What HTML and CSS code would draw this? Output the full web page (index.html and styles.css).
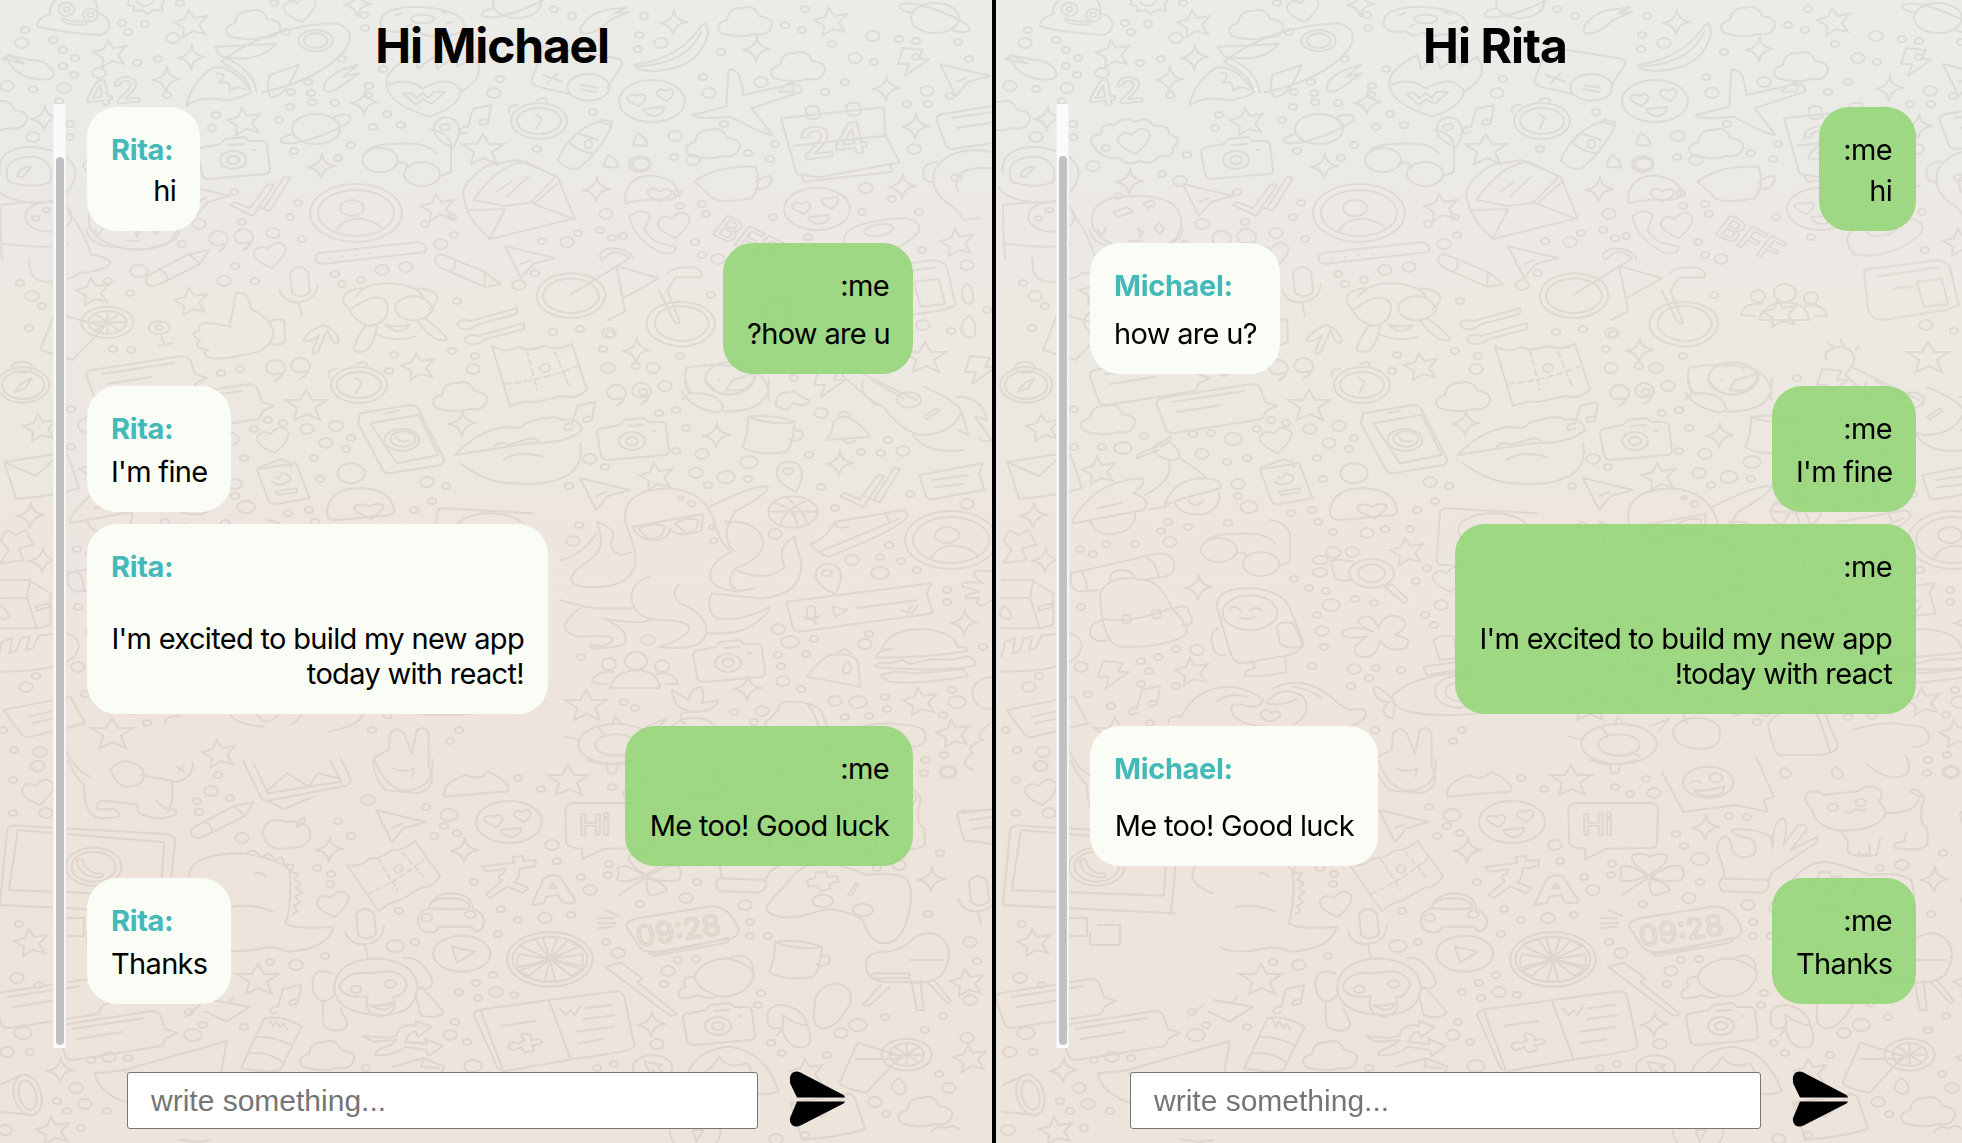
FILE: index.html
```html
<!DOCTYPE html>
<html lang="en">
<head>
<meta charset="utf-8">
<title>Chat</title>
<link rel="stylesheet" href="styles.css">
</head>
<body>
<main class="app">
  <section class="panel panel-left">
    <svg class="wallpaper" width="1003" height="1143" viewBox="0 0 1003 1143" aria-hidden="true">
      <defs>
        <marker id="dot-s" markerUnits="userSpaceOnUse" markerWidth="14" markerHeight="14" refX="7" refY="7"><ellipse cx="7" cy="7" rx="4.2" ry="3.1"/></marker>
        <marker id="dot-m" markerUnits="userSpaceOnUse" markerWidth="20" markerHeight="20" refX="10" refY="10"><ellipse cx="10" cy="10" rx="6.8" ry="4.9"/></marker>
        <marker id="dot-l" markerUnits="userSpaceOnUse" markerWidth="24" markerHeight="24" refX="12" refY="12"><ellipse cx="12" cy="12" rx="8.8" ry="6"/></marker>
        <marker id="star" markerUnits="userSpaceOnUse" markerWidth="44" markerHeight="36" refX="20" refY="16"><path d="M18 3l5 8 13-2-8 9 6 9-12-3-10 6 1-9-10-6 11-3z"/></marker>
        <marker id="star-b" markerUnits="userSpaceOnUse" markerWidth="54" markerHeight="40" refX="25" refY="18"><path d="M24 3l6 10 15 0-12 8 5 12-13-6-13 6 3-12-12-8 15 0z"/></marker>
        <marker id="spark" markerUnits="userSpaceOnUse" markerWidth="44" markerHeight="36" refX="20" refY="16"><path d="M21 3q0 11 14 13q-13 1-15 13q-2-11-14-12q14-2 15-14z"/></marker>
        <g id="cam"><path d="M-28-13l16-3 4-5 20-2 4 4 13 0q5 0 5 5l3 23q0 5-5 5l-56 5q-6 0-7-5l-4-22q0-5 7-5z"/><ellipse rx="13" ry="9"/><ellipse rx="6" ry="4"/><path d="M-4-15l15-1M20-10h3"/></g>
        <g id="smile"><ellipse rx="33" ry="21"/><path d="M-13 5q-14-6-12-9q3-4 10-1q5-4 8 0q2 4-6 10zM15 0q-12-5-10-9q3-4 8-1q6-4 8 0q2 4-6 10zM-9 8l21-2q0 7-9 9q-9 0-12-7z"/></g>
        <g id="cloud"><path d="M-24 13q-8-9 6-13q2-13 15-12q13-4 17 8q17 2 12 12q-4 8-16 6q-16 5-34-1z"/></g>
        <g id="heart"><path d="M0 12q-20-8-18-16q5-8 14-3q7-10 16-4q6 7-12 23z"/></g>
        <g id="clock"><ellipse rx="28" ry="18"/><ellipse rx="22" ry="13"/><path d="M-3-7q8 4 4 8l-4 7M-30-8q-2-8 8-8M-2-21q10-5 10 2"/></g>
        <g id="note"><path d="M-12 14q-8 3-8-1q2-6 8-4l5-18 18-4-3 18q-8 4-9 0q2-5 9-3"/></g>
        <g id="quotes"><path d="M-12 10q8-3 6-8q-14 4-15-6q4-10 14-6q12 8-5 20zM13 8q8-3 6-8q-14 4-15-6q4-10 14-6q12 8-5 20z"/></g>
        <g id="avatar"><ellipse rx="46" ry="29"/><ellipse rx="38" ry="23"/><ellipse cx="-4" cy="-5" rx="12" ry="8"/><path d="M-20 18q8-14 26-12q14 2 20 9"/></g>
        <g id="bubble"><path d="M-52 3q-4-8 4-10l90-14q7 0 9 6l4 12 12 4-11 5-4 8-88 14q-8 0-9-6z"/><path d="M-38-3l72-11M-33 7l45-7"/></g>
        <g id="shades"><ellipse cx="-30" cy="-4" rx="18" ry="12"/><ellipse cx="12" cy="10" rx="18" ry="12"/><path d="M-42-14q10-8 50-6q16 4 18 10M-15 1q10-6 14 3M30 12l11-4v-28q-4-12-20-14"/></g>
        <g id="bolt"><path d="M-10-14l20 2-5 9h11l-24 17 4-12h-11z"/></g>
        <g id="plane"><path d="M-20-12l50 12-22 6-12 14zM-4 6l10-4"/></g>
        <g id="ticks"><path d="M-32 10l4-3 16 6 18-24 6 1-21 31zM2 13l20-31 6 1-20 33-12-4"/></g>
        <g id="pin"><path d="M8 18q-22-10-19-22q5-12 19-7q12 8 0 29z"/><ellipse cy="-3" rx="5" ry="3"/></g>
        <g id="pencil"><path d="M-31 12q-3-6 2-9l40-21 20-4-9 14-40 20q-8 4-13 0zM11-18l11 10M-19-3q8 4 8 10"/></g>
        <g id="group"><ellipse cy="-18" rx="11" ry="9"/><path d="M-26 9q4-16 26-18q22 1 24 18z"/><ellipse cx="-27" cy="-15" rx="7" ry="6"/><ellipse cx="26" cy="-13" rx="7" ry="6"/><path d="M-30 5l-14-1q2-13 22-11M30 5l12 0q-5-14-22-10"/></g>
        <g id="cup"><path d="M-25-18q0 20-6 30q14 9 44 5q6-4 9-30M-25-18q22-4 47 5q-20 4-47-5z"/><path d="M20-5q14 0 8 9q-8 4-12 0"/></g>
        <g id="mic"><path d="M-9-14q9-10 18 0l2 20q-9 8-18 1zM-20 4q6 14 20 12q17-1 19-18M0 17l3 13"/></g>
        <g id="map"><path d="M-50-20q14 8 26 1q12 5 26-1q14 5 28-2l15 46q-12 10-24 6l-28 6q-10-2-25 4z"/><path d="M-37 18q40-4 72-18M-15-16l10 40M13-14l14 34" stroke-dasharray="6 4"/><ellipse cx="3" cy="2" rx="5" ry="4"/></g>
        <g id="letter"><path d="M-34-13l59-9q4 0 6 5l10 30q-25 8-63 11q-4-14-12-37zl32 14 26-24"/></g>
        <g id="planet"><ellipse rx="24" ry="15"/><path d="M-22 5q-16 3-13 8q12 5 44-8q30-12 25-18q-8-3-16 1"/></g>
        <g id="fork"><path d="M-33 9q4-6 14-3l46-13M-33 9q3 8 16 4q8-6 14-6l30-8 0-5"/></g>
      </defs>
      <g id="doodles" class="doodles">
        <polyline class="dots-s" points="25,30 53,40 63,50 75,58 74,75 63,66 33,89 137,63 158,59 122,23 128,32 145,24 180,3 167,95 59,101 274,3 286,32 364,15 365,28 342,59 383,69 369,86 368,95 308,82 311,93 312,102 291,92 290,107 335,103 387,114 279,120 373,127 401,125 351,145 338,158 294,151 212,128 216,115 500,79 593,112 554,9 572,16 537,149 70,124 70,137 234,192 242,222 290,217 298,203 302,239 182,244 425,224 452,217 454,235 578,233 542,241 600,230 623,236 108,281 130,293 20,283 42,306 29,328 255,281 235,266 335,274 342,284 361,280 535,273 457,301 113,349 131,350 221,373 240,369 394,355 389,371 452,351 475,356 553,332 580,329 603,349 636,366 639,35 638,49 644,16 721,52 703,77 785,25 802,30 805,9 832,44 874,62 845,82 825,92 899,39 916,41 916,57 958,42 969,59 907,104 928,104 950,96 724,124 775,144 748,153 770,159 674,157 862,212 892,199 919,212 702,204 680,206 678,193 706,214 773,217 612,238 702,255 695,242 808,237 922,250 711,295 951,331 610,334 680,356 643,392 794,378 987,310 103,148 115,196 159,174 184,155"/>
        <polyline class="dots-s" points="71,409 71,447 99,447 141,436 190,434 208,433 254,429 268,420 283,423 346,449 351,438 314,458 224,462 244,458 235,496 320,479 446,486 432,501 414,510 288,513 309,510 315,522 330,532 382,529 407,529 225,523 185,527 165,522 158,531 132,544 103,544 77,549 90,554 291,579 306,588 323,591 314,615 321,647 352,599 371,603 424,568 413,581 422,615 431,625 78,607 85,694 108,706 138,661 155,657 146,671 138,684 173,649 173,686 147,723 309,666 373,668 366,678 398,670 348,686 372,730 459,730 450,741 659,413 676,410 686,428 676,451 605,467 748,479 708,485 569,486 809,455 861,452 881,453 888,440 821,487 835,508 910,494 889,545 880,557 901,561 917,570 947,590 947,602 579,525 814,639 806,654 778,655 781,666 801,689 869,634 581,657 624,702 635,708 734,712 754,722 885,697 887,709 845,717 869,716 952,690 983,647 943,715 925,760 944,755 36,676 3,730 14,750"/>
        <polyline class="dots-s" points="13,780 13,813 218,775 197,801 230,798 199,812 338,821 351,836 426,807 434,836 457,833 444,826 474,882 501,909 518,920 498,934 399,911 317,868 331,874 330,884 415,942 325,956 270,962 19,924 39,985 30,1052 91,1060 128,1058 189,1012 203,1025 244,1027 57,1101 67,1111 107,1111 81,1128 459,992 476,983 493,975 478,998 514,995 455,1022 467,1042 366,1068 518,778 541,789 612,787 627,794 643,779 673,834 681,846 726,816 744,817 609,864 608,875 581,877 557,861 640,904 697,882 571,915 606,942 750,922 750,936 768,936 678,960 696,959 664,984 761,993 758,1005 597,1068 614,1064 771,1043 782,1053 827,1055 885,1017 925,1030 943,1016 877,868 924,773 928,914 940,853 886,1114 939,1074 805,1135 977,961"/>
        <polyline class="dots-m" points="22,43 64,88 7,86 99,73 173,38 494,93 33,137 273,233 199,224 441,244 606,214 567,242 32,296 224,281 382,270 406,267 519,285 473,369 609,333 608,368 661,43 709,93 761,82 873,36 855,58 927,91 675,136 693,160 914,149 866,188 718,259 967,265 923,325 653,368 307,429 336,426 326,443 199,454 235,484 427,482 364,533 167,542 319,631 438,605 78,667 194,650 351,669 702,454 665,386 590,459 696,473 821,413 903,451 967,504 775,534 852,560 573,541 778,629 783,681 865,644 648,640 762,711 835,701 26,687 40,752 38,766 90,166 177,181"/>
        <polyline class="dots-m" points="37,766 46,813 211,791 242,838 368,800 552,845 545,918 296,965 17,978 7,1052 109,1057 76,1088 85,1104 5,1130 496,992 450,1035 651,793 590,890 686,898 745,905 618,953 668,971 657,1044 841,1033 899,865 948,772 875,1102 949,1088 776,1139 970,1000 967,1038 970,942"/>
        <polyline class="dots-l" points="139,271 641,164 120,448 230,439 246,507 328,605 749,462 726,477 880,573 790,642 858,702 957,702 948,772 449,815 395,946 23,1033 193,1035 473,1066 697,859 858,1025"/>
        <polyline class="stars" points="110,53 191,23 244,121 438,207 93,291 191,301 418,366 831,21 957,242 96,470 40,427 404,551 189,671 656,476 920,701 953,733 31,942 53,1130 219,753 807,1072 967,982 970,1058 777,313"/>
        <polyline class="stars-b" points="484,149 926,357 307,405 587,705 259,979 113,733 569,780"/>
        <polyline class="sparks" points="191,57 166,79 364,102 321,166 596,189 357,4 636,350 44,118 673,22 756,49 886,88 915,126 902,186 126,181 195,587 30,515 42,560 462,423 716,435 839,463 964,622 747,688 329,849 464,850 60,1070 702,827 651,1024 931,879"/>

        <use href="#cloud" x="253" y="23"/><use href="#cloud" x="745" y="20"/><use href="#cloud" x="798" y="65"/><use href="#cloud" x="713" y="142"/><use href="#cloud" x="105" y="418"/><use href="#cloud" x="460" y="395"/><use href="#cloud" x="327" y="1054"/><use href="#cloud" x="925" y="1110"/><use href="#cloud" x="0" y="114"/>
        <use href="#heart" x="302" y="10"/><use href="#heart" x="272" y="256"/><use href="#heart" x="676" y="226"/><use href="#heart" x="275" y="441"/><use href="#heart" x="335" y="905"/><use href="#heart" x="40" y="793"/><use href="#heart" x="448" y="580"/><use href="#heart" x="133" y="142"/>
        <use href="#cam" x="233" y="160"/><use href="#cam" x="632" y="441"/><use href="#cam" x="728" y="663"/><use href="#cam" x="718" y="1026"/>
        <use href="#smile" x="652" y="101"/><use href="#smile" x="817" y="209"/><use href="#smile" x="509" y="822"/>
        <use href="#clock" x="539" y="121"/><use href="#clock" x="359" y="385"/>
        <use href="#note" x="480" y="118"/><use href="#note" x="584" y="415"/><use href="#note" x="146" y="699"/><use href="#note" x="290" y="998"/>
        <use href="#quotes" x="230" y="242"/><use href="#quotes" x="287" y="371"/><use href="#quotes" x="628" y="396"/>
        <use href="#avatar" x="356" y="213"/><use href="#avatar" x="951" y="540"/>
        <use href="#bubble" x="140" y="377"/><use href="#bubble" x="207" y="405"/><use href="#bubble" x="990" y="121"/><use href="#bubble" x="46" y="1000"/><use href="#bubble" x="110" y="1032"/>
        <use href="#shades" x="410" y="164"/><use href="#shades" x="246" y="554"/>
        <use href="#bolt" x="913" y="62"/><use href="#bolt" x="829" y="383"/><use href="#bolt" x="110" y="675"/><use href="#bolt" x="980" y="370"/>
        <use href="#plane" x="525" y="258"/><use href="#plane" x="600" y="490"/><use href="#plane" x="960" y="76"/><use href="#plane" x="396" y="822"/><use href="#plane" x="200" y="196"/>
        <use href="#ticks" x="262" y="195"/><use href="#ticks" x="872" y="486"/>
        <use href="#pin" x="445" y="130"/><use href="#pin" x="788" y="474"/><use href="#pin" x="827" y="576"/>
        <use href="#pencil" x="178" y="272"/><use href="#pencil" x="223" y="824"/><use href="#pencil" transform="translate(464 275) rotate(50)"/>
        <use href="#group" x="636" y="679"/><use href="#group" x="782" y="311"/>
        <use href="#cup" x="773" y="435"/><use href="#cup" x="800" y="960"/>
        <use href="#mic" x="299" y="286"/><use href="#mic" x="365" y="928"/><use href="#mic" x="978" y="895"/>
        <use href="#map" x="542" y="366"/><use href="#map" transform="translate(395 868) rotate(-18) scale(.9)"/>
        <use href="#letter" x="38" y="475"/><use href="#letter" x="824" y="1116"/>
        <use href="#planet" x="316" y="129"/><use href="#planet" transform="translate(935 18) scale(1 -1)"/><use href="#planet" x="517" y="3"/>
        <use href="#fork" x="490" y="315"/><use href="#fork" x="497" y="330"/>
        <path d="M92 148q-10-12 6-14q0-12 14-9q8-10 20-3q14-7 18 4q16-2 16 8q16 5 4 13q2 11-14 9q-6 10-20 5q-12 6-20-3q-18 1-24-10zM58 918h26v18h-22M95 925h22v20h-30v-12M962 813l44-5M958 818q-3-6 4-7l40-2M958 818l6 22 36 5M970 820l30-4M972 829l26-3"/>
        <path d="M90 228q-6-24 20-30q40-6 58 5q16 14 8 30q-6 14-30 16q-40 3-56-21zM110 212l14-5 6 5-16 5zM140 203l10-3 2 5-8 3zM156 222l5 8-5 4-4-6zM135 228l5 4-3 5z"/>

        <g transform="scale(.4209 .3333)">
          <path d="M90 80q-8-22 30-38q-5-25 15-45M90 80q60 18 150 25q25-12 18-42q-8-20-28-23q5-25-8-40M145 55q10 25 60 18l2-10q-30 5-62-8z"/>
          <ellipse cx="158" cy="28" rx="19" ry="20"/><ellipse cx="215" cy="45" rx="17" ry="19"/><ellipse cx="158" cy="28" rx="7" ry="7"/><ellipse cx="215" cy="45" rx="7" ry="7"/>
          <path d="M305 0l-2 15 15 4 0 14 20-2 12 12 14-14 22 4-2-18 6-15M325 5q20 25 38 0"/>
          <path d="M525 185Q640 75 800 70Q850 90 820 150Q760 240 622 277M510 140l145-8q-40 60-130 37zM640 225l70-30q-30 90-60 96q-20 0-10-66zM540 175q65 40 70 103M530 190q60 35 65 85M443 318q10-70 62-115q50-10 92 75q-50 30-75 20q-50-10-79 20M515 220q30 0 5 28q30-10 25 25q20-20 40-3"/>
          <ellipse cx="750" cy="122" rx="41" ry="32"/><ellipse cx="750" cy="122" rx="28" ry="22"/>
          <path d="M15 170q10 40 45 60q60 20 68-5q-10-45-55-45l-55-15 40 26-52-14zM770 270q-5-30 40-60l40-15-35 35 38-10-40 35q-30 30-43 15z"/>
          <text x="205" y="322" font-size="104" transform="rotate(-8 205 322)">42</text>
          <path d="M905 80q-10-60 90-60q110 10 108 60q-15 35-60 22q-25 14-45-5q-25 18-40-4q-35 10-53-13zM940 45l15-5M965 80l12-6M1050 35l12 8M1060 70l18-4"/><ellipse cx="1004" cy="57" rx="28" ry="13"/>
          <path d="M1380 80q20-40 60-50l50-8-30 18 35-5-45 25q-40 50-70 38z"/>
          <path d="M1020 350Q915 310 918 245Q920 205 985 165l8 42 38-37 8 36 42-36 6 30 40-30Q1160 230 1095 275Q1090 320 1020 350zM918 258q45-30 87 8q60-45 90 5M957 280l22 0 10 15 15-17 14 16 12-18 28 0-32 36-20-14-18 16z"/>
          <path d="M1290 140l175 35q18 5 12 20l-35 70M1290 150l-27 90q0 15 15 20l75 22M1310 160l10 20M1290 225l45 20M1325 220l-25 30"/><ellipse cx="1398" cy="262" rx="50" ry="40"/><path d="M1380 255l38 8M1378 268l38 8"/>
          <path d="M1325 480q30-85 95-115l35 10q-30 80-80 130q-30 8-50-25zM1355 430q20 25 55 30M1375 400l45 20M1420 370l10-12 25 8-5 14"/>
          <ellipse cx="1398" cy="432" rx="9" ry="13"/><path d="M1505 435q0-20 12-35q25 20 20 38zM1435 500q0-20 12-35q25 20 20 38z"/><ellipse cx="1520" cy="492" rx="25" ry="24"/>
          <path d="M1100 575q10-40 60-80l70-15 95 50 40 125-200 62q-60-60-65-142zM1125 600q60-110 125-115l70 45-60 78-60 10zM1115 630l85-2-38 90M1260 608l105 50M1325 550l-55 60M1180 575l35-30M1205 590l50-60"/>
          <path d="M5 780q-5-80-5-165q60-10 125-10M0 730q120 20 160 0M0 520q-10-75 75-80q105 15 105 85q-15 80-90 85q-90-10-100-50M20 545q-20-75 60-75q50 10 40 75q-40 25-100 0zM40 530q5-30 35-30l-20 30z"/><ellipse cx="115" cy="650" rx="55" ry="45"/><ellipse cx="85" cy="655" rx="9" ry="7"/><ellipse cx="110" cy="630" rx="9" ry="7"/>
          <path d="M70 775q-5 75 50 70q60-10 65-25q80-10 77-35q-20-20-45-20q-20-80-55-130"/>
          <path d="M205 690q10 50 70 50q60 20 90 0q60-10 62-50M245 680q-10 40-20 10M300 722h30"/>
          <ellipse cx="255" cy="967" rx="62" ry="47"/><ellipse cx="255" cy="967" rx="45" ry="34"/><path d="M255 935v64M215 967h85M230 945l52 46M280 945l-52 46M130 940l118 40-75 100-78-30z"/>
          <ellipse cx="378" cy="983" rx="25" ry="19"/><ellipse cx="378" cy="983" rx="8" ry="7"/><path d="M382 1003l8 32M375 1038l35-8"/>
          <path d="M545 980q15-90 15-100q30-10 35 45q50 30 55 75q-10 60-75 65q-30 12-75 10q-25-15-5-25q-40-5-20-30q-30-20 0-30q-10-15 15-22l60 12M640 965q15-10 35-5l2 65q-15 15-38 5"/>
          <path d="M720 1020q20-35 48-45q30 10 38 50q-15 15-28-35l-25 70q-15 5-10-10l15-45q-20 25-38 15z"/>
          <path d="M755 760l240-34q25 10 15 30l-245 36q-25-5-10-32z"/><path d="M780 775h1M812 770h1M845 766h1M878 762h1"/>
          <path d="M845 890q20-40 80-40q70 5 80 45M830 930q-40-55 30-65M1020 930q50-55-30-65M830 930q80-70 92-10q0 50-45 58q-35-15-47-48zM1030 930q-20-50-60-40q-50 20-20 60q50 30 80-20zM870 975q-40 75-25 80q40 10 50-75M1010 955q60 60 50 65q-30 10-70-60M915 975q30 8 58 0q-10 20-35 18zM890 1000q50 30 95 10"/>
          <path d="M1275 890q5-65 82-70q75 5 82 65q-10 65-85 70q-75-10-79-65zM1290 890q5-50 67-55q60 5 67 55q-10 45-70 50q-60-10-64-50zM1355 885l140-110q-20-25-45-15l-20 20q-15-20 15-35q50 0 60 30M1470 800l95 35-85 60-15-90 20 130-40 25"/>
          <ellipse cx="55" cy="1155" rx="62" ry="53"/><ellipse cx="55" cy="1155" rx="50" ry="42"/><ellipse cx="52" cy="1102" rx="24" ry="17"/><path d="M35 1175l15-25 25-15-15 30z"/>
        </g>
        <g transform="translate(600) scale(.4209 .3333)">
          <path d="M82 195q110-20 160-120l10-5 5 30q-20 105-120 112q-55 2-55-17zM90 200q120-10 150-105"/>
          <path d="M300 320l5-110q30-10 35 75l90-25q50-20 50 15l-120 50 50 80q-20 0-100-55q-80 10-90-5zM425 275q20-30 35-25v25z"/>
          <path d="M430 355l245-33 2 80 35 85-190 45-55-10zM460 437l218-30M480 530l5 15 210-30-6-20M488 325q10-10 30-5l5 30q-10 10-30 5zM585 315q10-10 30-5l5 30q-10 10-30 5z"/>
          <text x="482" y="480" font-size="128" transform="rotate(-9 482 480)">24</text>
          <path d="M60 585q10-60 65-58q60 10 62 58q-15 18-35 15q-40-5-92 10zM140 605q-35-20-25-35q15-10 25 5q20-15 30 0q0 15-30 30z"/>
          <path d="M225 545q50-50 145-45q15 60-10 95q-90 20-100-10zM370 545q40-30 38-8q-5 35-40 30"/>
          <path d="M70 650q25-30 50-5l-15 45q30 45 40 40l35 10q0 30-40 15q-60-40-70-105z"/>
          <text x="262" y="700" font-size="92" transform="rotate(32 262 700)">BFF</text>
          <path d="M580 720q0-55 140-65q50 5 35 45q-60 75-150 65q-20-5-25-45z"/><ellipse cx="662" cy="690" rx="35" ry="17" transform="rotate(-12 662 690)"/>
          <path d="M930 455q-100-20-135 55q-15 70 45 110l25 40 35-5M800 485q-40 5-30 50q10 15 25 10M930 505q-100-10-80 70"/><ellipse cx="847" cy="533" rx="13" ry="10"/>
          <path d="M620 810l175-30q25 5 30 25l20 110-30 15-150 30q-25 0-35-30zM650 830l145-28M690 865l45-5M745 845l60-8 15 75-58 8z"/>
          <path d="M110 970q5-60 82-65q75 5 82 65q-10 65-80 70q-80-10-84-70zM130 970q5-50 62-52q60 5 67 52q-10 50-65 54q-60-10-64-54zM160 820q10-20 60-18q30 10 20 30h-60l-20 40 30 95q-5 10-15-5l-35-90"/>
          <path d="M205 1105q60-20 150 0q50 30 45 95M205 1105q-10 50 10 70l-20 25"/><ellipse cx="308" cy="1135" rx="58" ry="48"/><path d="M300 1170l15-30 55-20q0 60-70 50zM280 1138h5M330 1110h4"/>
          <path d="M530 1080q-10-35 40-40q40 20 20 60l160 100M590 1100l-15 25 80 90M545 1040l-10-12M570 1035l-5-15M600 1050l8-12"/>
          <path d="M860 880q0-20 12-30q20 20 12 60q-20 10-24-30zM858 990q0-30 20-42q20 20 12 60q-20 15-32-18z"/>
        </g>
        <g transform="translate(560 380) scale(.3333)">
          <path d="M380 0q-5 25 10 40q90-5 100 45q-10 20-50 5q-50-15-75-55M490 95q150 0 135-100M440 5q60 80 140 0"/>
          <path d="M910 5q-20 40 60 75q50 70 110 85q90 0 120-60q20-30-110-85M1060 165q40 60 150 45M935 0l95 55M1205 100l20 65-30-15M1190 50q80 0 90 70l-35-10 50 70q-30 10-40-10"/><ellipse cx="1047" cy="60" rx="36" ry="23"/><path d="M1092 110l38-25 8 8-38 25z"/>
          <path d="M650 80q-15-45 55-45q20 20 45 25q-10 25-50 10l-20 20z"/>
          <path d="M800 180q20-25 20-55q30-30 65 0q20 10 45 45zM835 105q20-20 36 0M848 182q20 12 38 0"/>
          <path d="M215 660q-5-50 52-70M215 660q10 55 80 60q100 0 92 30q-20 30-90 50q150 20 142-60q-20-50-80-70q-30-30-2-55M200 440q-30-110 130-115q100 10 130 90q20 80 55 100q-80 40-60 90q30 40 130 20l-60 10M200 440q40 90 20 130q-30 60-150 50q-60-10-20-50l50-40q40-30 10-105q50 20 50 40q-20 50 25 60l30-8M450 380q140-70 175-60q0 20-100 75q-50 80 0 120M495 425q100-5 115 60q0 50-85 80q-30 50 0 60M525 570q100 40 150-10q-30-60 30-90q0 20 20 80q0 100-130 105l-140-15q-20 50 15 75q80 10 160-35q0 20-60 60q-40 25-130 20M0 540q60-10 110-80M0 660q60 20 110 25h105M60 685q-90 70 0 85q90-5 100 5q-10 30-70 20q-10 20 100 0q30-40-60-80q100 20 140 5"/>
          <path d="M218 440l210-38-3 50q-70 25-95-5q-5 25-30 32q-60 10-82-39zM235 445q50-20 78-5q0 40-50 35zM345 430q40-20 70-10q0 40-40 38z"/>
          <ellipse cx="363" cy="353" rx="8" ry="5"/><ellipse cx="395" cy="372" rx="12" ry="8"/><ellipse cx="455" cy="442" rx="8" ry="6"/><ellipse cx="461" cy="482" rx="12" ry="8"/>
          <ellipse cx="699" cy="396" rx="74" ry="47"/><path d="M625 395l147 0M680 352q60 50 60 80M660 440q10-50 75-75M640 370q70 10 70 70"/>
          <path d="M752 490q30 0 75-65l150-25q70-20 65 10q-20 35-235 120q-40-10-55-40zM780 515l240-100M825 430q5 20 40 10M975 395l12 30"/>
          <path d="M1078 285l190-35-10 30 15 50-155 28q-15 0-20-10zM1118 300l108-15M1124 322l84-10"/>
          <path d="M680 665l435-55-15 30 18 60-400 55q-15 0-20-15zM890 684l180-23M818 680l45 10-38 20zM740 685q15-15 25 0l2 25q-15 10-25 0zM730 710q30 20 52-5M762 720l5 12M1025 690l15 8 15-18M1045 695l10 5 18-22"/>
          <path d="M1300 575q-80-10-50 20l20 15q-80-10-60 10l50 15q-60 10-40 20l40-2q-20 20 5 25l35-20"/>
          <path d="M965 810q20-65 130-62q90 10 100 55q30-5 28 10q-120 20-275 20q0-20 50-25zM945 860q0-15 50-10l30-10 30 12 60-15 60 2 50-10q30 15 20 28q-100 20-290 5zM960 885l50-10 60 5 140-12 15 20q-180 30-240 15z"/>
          <path d="M740 890q50-60 70-65q80-10 85 30l5 65zM832 820q20-25 42 0M850 880q-5-30 15-35q15 20 0 35z"/>
          <path d="M385 960l-50-30q10 60 50 60M385 960q10-40 40-40q10 30 0 50l50-10q-10 40-90 35l-20 5q-10 20 10 30M330 1050q20-40 90-35q60 10 50 60q-10 40-80 30q-60-10-60-55z"/>
          <path d="M615 1030l40-40q0-20 20-25q80-5 110 30q20 60 40 100q0 25-60 30l-120 0q-20-30-30-95M740 970q30 30 60 145"/>
          <ellipse cx="168" cy="1092" rx="113" ry="60"/><ellipse cx="168" cy="1095" rx="62" ry="32"/><path d="M60 1080l-45-10M155 1035l10-25 20 22M140 1150l5 30h20l10-30M260 1040l60-25-35 40M115 1042l20 25M230 1130l-25-15"/>
          <path d="M870 1050q90-30 160-15q80 0 65 50q-20 20-50 15M1290 1030q-50 40-20 50q-60 20-30 40q-50 30 0 50"/><ellipse cx="1293" cy="940" rx="56" ry="48"/>
        </g>
        <g transform="translate(-3 380) scale(.3333)">
          <path d="M10 480l20-30 25 15 30-15 25 45-45 10 15 35-70 10 25-40zM5 600h90l65 40v95l-38 10H5M5 655l85-2 10-55M90 653l30 95M115 680l40-10v12l-38 10z"/><path d="M0 705q0-20 14-28q25 25 20 35q-10 15-34-7zM5 830l10-45 30-10-8 45 20-5 15-40 25-5-10 40 20-5 20-40h20q90-20 98 30q0 80-240 80"/>
          <path d="M410 235q-10-10 60-35l40-30q10 5-8 20l-20 10M410 235l65-25M460 205q20-30 55-15q40 40 10 50q-55 0-65-35zM505 240q20 60-70 105M540 235q50 30 80 60M220 430q-10-15 50-75q60-55 155-60q20 10-25 45q60 20 30 50zM495 375q20-70 100-80q80 0 65 30q-50 15-110 30zM500 380l-55 8"/><path d="M270 425q30 60 110 25q30-20 25-48M525 370q20 40 90 32q50-20 42-65"/><path d="M293 385l70-16M565 360q20 30 45 0"/>
          <path d="M215 580l250-58q60-5 58 35q0 30-40 35l-60 8M215 575q-10 50 20 60l60-5M240 570q20 20 20 60M440 535q30 10 35 55M330 600q0-30 40-30q30 5 35 25M300 640q30-60 130-40q50 0 85 85q60 60 40 80q-60 40-200 35q-50-20-55-160zM305 715q80 20 205-30M310 720q-50 10-38 50q20 20 50 10M520 685q45-15 45 10q30 40-15 40"/><rect x="366" y="705" width="26" height="24" rx="8"/><rect x="456" y="690" width="26" height="24" rx="8"/>
          <path d="M650 680q0-60 110-55q90 10 110 60l40 100q0 35-70 45l-110 20q-30 0-40-35zM690 690q10-20 35 5M750 692q20-15 35 0M720 712q20 10 45-2M830 740q15-20 50-10l30 70q-50 10-70-10zM655 745q-30 10-15 60q10 25 35 20M760 850l5 15q-35 5-30 22h65l60-10-5-40"/><ellipse cx="750" cy="698" rx="82" ry="52"/>
          <ellipse cx="1115" cy="580" rx="67" ry="43"/><ellipse cx="1115" cy="580" rx="40" ry="27"/><path d="M1155 620l20-8 48 45q0 15-15 10zM1060 545q-80-15-65 10l10 40q10 10 50 5"/><ellipse cx="1000" cy="517" rx="22" ry="16"/><ellipse cx="1057" cy="515" rx="20" ry="15"/><ellipse cx="962" cy="540" rx="23" ry="13"/><ellipse cx="960" cy="577" rx="22" ry="13"/>
          <path d="M1120 755q-60-25-40-40q35-20 55 30q20-55 70-30q30 20-20 50q60 10 30 40q-50 15-75-25q-10 60-60 50q-40-20 20-60q-70 10-75-10q20-30 95-5z"/>
          <path d="M1300 780q30-20 60-10l10 65-50 5zM1270 860l140-20v25l-130 20zM1440 1000q-150 15-230-10q-50-25-25-50q60-60 255-65M1175 955q-50-50-55-25q10 40 50 35l-20 20q0 30 30 30l5-45"/><ellipse cx="1375" cy="935" rx="70" ry="48"/><ellipse cx="1375" cy="935" rx="38" ry="28"/>
          <path d="M505 1030q0-25 40-20q40-90 150-90q60 10 95 40q-10 30-60 15q-50-10-30 30q20 30 100 35M650 965q40-30 90-15M820 925q100-50 200 50l30 15q60-10 45 20q-20 30-100 45M800 970q40-60 110-20q30 50-30 85M800 970q50 10 90-15M780 1000q20-20 35 0q15-15 28 5q-10 15-35 20q-20-5-28-25zM880 920q60 10 85 35"/>
          <path d="M780 265l70-28 28 10 5 15M780 268l118-18 40 105-105 18q-15 0-18-10zM835 290q10 15 20-10q30 5 25 20q-30 25-55 5M835 335l65-10v12l-58 8z"/>
          <path d="M1090 100l150-25q20 0 25 15l78 150-10 15-155 25q-15 0-20-10l-75-140zM1120 130l145-25 60 120-125 25z"/><ellipse cx="1215" cy="180" rx="52" ry="33"/><ellipse cx="1218" cy="177" rx="38" ry="23"/><path d="M1195 170q10 20 40 12M1165 100l38-8"/>
          <ellipse cx="1062" cy="280" rx="41" ry="30"/><path d="M990 390q10-65 100-66q100 5 102 75q-15 10-45 8q-80 10-140 13q-20-5-17-30zM1125 415q-60-20-52-35q20-15 45 0q20-15 40-5q10 10-33 40z"/>
          <path d="M1375 225q60-70 150-85q50 10 60-10q90-30 110-10q50-10 60 30q-40 40-160 40q-60 10-220 35zM1390 250q80 60 160 60q110 10 170-30q40-30 30-90M1490 200q20-20 40-5l70-20q20 0 30 15M1520 240q40-30 120-10"/>
          <path d="M1310 540l10-140q0-15 20-15l270 15M1310 540q0 15 20 15l250 5"/><ellipse cx="1480" cy="450" rx="105" ry="50"/>
          <path d="M20 990l200-40 45 80-170 42q-20 0-30-20zM95 1010l70-15M105 1030l70-15M200 1100q40 80 80 90M1180 1060q20-25 40 0l25 60 15-70q20-15 35 10l0 100q30 60-30 80l-100-10q-50-60-30-100l40-20z"/>
        </g>
        <g transform="translate(0 760) scale(.3571 .3333)">
          <path d="M190 0q20 50 45 75q0 90 40 98q60 5 58-10q-5-20-30-15l-30 0q-5-30 20-25l90 10 5 25q50 30 105 5q5-20-35-20l-20-20M480 65q10 50-10 90M308 30q40-50 90-5q20 50-40 55q-30 0-50-50zM540 10q0 45-45 55l-100-20M495 20l20 15M500 35l15-20"/>
          <path d="M680 0l50 110q5 15 20 12l220-45q15-10 10-25l-25-55M710 10l40 90 205-35-30-65M745 95l60-55 60 40 25-40 60 15M755 125l40 22 90-40"/>
          <path d="M1050 0q30 90 90 92q80-10 70-95M1100 25q30 15 60 0l-5 25M1245 110q-10-40 60-65q40 20 60-10q50 20 60 50q0 15-25 10z"/>
          <path d="M800 185q-60-20-65 40q20 50 65 40q80 0 68-55q-15-30-68-25zM830 200q0-20 22-25q5 20-22 25z"/>
          <path d="M0 430l20-220q5-15 30-13l415 25q25 3 25 20l-20 220M25 390l25-180 410 37-10 160zM0 435l480 25"/><ellipse cx="262" cy="320" rx="78" ry="57"/><ellipse cx="262" cy="320" rx="62" ry="45"/><path d="M215 300q20-10 20 15q20 30 50 25q10 10-5 12q-60 0-65-52z"/>
          <path d="M530 340q10-60 150-60q110 20 130 50q10 80-10 160q30 20 135 10q-20 70-130 75q-50-20-70-10q-90 20-130-5M530 340q0 40 60 60M690 280q20-20 40 10M735 290l20-10 15 20 20-8 8 22 25 0-10 22 25 5-15 18 20 10-15 16 17 12-18 14 14 16-18 10 10 18-14 8M650 440q60-10 115 15M715 340q20-5 30 10"/>
          <path d="M1170 480q0-25 30-35q10-40 60-45q60 0 65 45q35 20 30 45q0 20-25 25l-10-15h-90l-10 15q-50 10-50-35zM1200 445q60 5 115 0q0-30-60-30q-50 0-55 30z"/><ellipse cx="1195" cy="473" rx="15" ry="11"/><ellipse cx="1317" cy="463" rx="15" ry="11"/>
          <path d="M1350 320q80-10 90-12l-5-18 30-2v15l35-3v18l-45 8q0 30-15 40l40 18-15 15-45-20-45 35-15-10 45-42q-20-15 5-20l5-15-55 8z"/>
          <ellipse cx="1293" cy="581" rx="80" ry="54"/><path d="M1265 560l65 15-50 33z"/>
          <ellipse cx="1540" cy="598" rx="120" ry="82"/><ellipse cx="1540" cy="598" rx="105" ry="68"/><path d="M1540 595l-20-60q20-10 40 0zM1540 598l-85-40q15-20 45-18zM1540 598l-90 25q-5-30 5-40zM1540 598l-60 50q-20-10-28-15zM1540 600l-15 62q20 5 30 0zM1540 598l60 50 30-20zM1540 598l92 20 0-35zM1540 598l50-58 30 20z"/>
          <path d="M935 690q0-90 120-95q110 10 115 90q-10 80-100 80q-120 0-135-75zM950 680q20-50 90-40q90-20 100 35q-15 40-40 35q20 50-35 60q-50-10-35-60q-70 5-80-30zM1035 735q40 5 65-8q-10 30-40 20zM930 640q-50-20-55 25q0 50 30 60q40-10 32-45M905 720q-5 80 10 85q50 20 58-15l-20-45M1130 595q40-10 75 50q20 45-30 40M1180 680q60 70 63 80q-30 20-65 5l-15-65"/><ellipse cx="997" cy="688" rx="15" ry="11"/><ellipse cx="1093" cy="672" rx="15" ry="11"/>
          <path d="M740 775q50-10 105 25l-60 130q-30 10-110-5zM720 830q50 0 95 25M700 880q50-5 90 25M755 780l10 20 8-16 12 20 8-14 12 20"/>
          <path d="M1015 828l70 5 25-5q5-40 55-30v-15l45 18-40 30-5-15q-20-5-30 30l60 5-5-15 50 22-40 30-5-18-60-10q-30 30-85 25q0-15 45-30l15-15-65 5z"/>
          <path d="M590 720l110 20-65 45-60-30M655 710l-15 20M520 770l40-35M265 940q60-5 90-12l280-85-15 90M265 940q10 60 95 90M345 930q60 60 110 95"/>
          <ellipse cx="77" cy="1005" rx="38" ry="62" transform="rotate(-14 77 1005)"/><ellipse cx="77" cy="1005" rx="24" ry="45" transform="rotate(-14 77 1005)"/><path d="M60 945l-60 30M90 1065l-90-10"/>
          <path d="M1100 920l85-25 60 25-10 20M1185 895l-5 25 50 5M500 1138l50 8 40-5"/>
        </g>
        <g transform="translate(397 760) scale(.3584 .3333)">
          <path d="M470 145q5-15 20-16h210q20 0 20 20l-3 100q0 15-20 15l-120 2-60 32v-32q-35 0-45-15zM730 35l60 120 150-20 85 20-10-35 28-10-50-120M530 0q60 25 130 0"/><text x="508" y="224" font-size="86">Hi</text>
          <ellipse cx="860" cy="67" rx="70" ry="47"/><path d="M810 68q15-10 30 0M820 90q40 5 85-12q0 20-20 28q-45 10-65-16z"/><ellipse cx="882" cy="53" rx="18" ry="13"/>
          <path d="M900 355q-20 20 0 38l110 5q25-10 18-38zM905 350q0-30-20-75q0-40 20-45q20 0 20 40q20 35 60 15q20-25-10-50q-50-10-50-25q60-10 110 20l5 35q0-90 30-90q15 10 0 80l40-60q25-5 25 15l-45 60 75-40q0 20-20 30l-105 75-15 30"/>
          <path d="M1150 150q-30-30-10-55q30-5 40 10l100-12q20-20 50-10q25 20 5 40q50 50-30 80q-130 30-155-50zM1225 210q30 30 25 45q-10 30 30 32l30-5v-30M1340 235l-10 50q-50 10-50-10M1355 160q90 0 95-50l-28-15q20-20 40 20q-20 80 10 90v50q-20 20-90 10q-10-20 25-20l5-25M1240 155q20 10 30-8q20 10 30 0"/><ellipse cx="1208" cy="142" rx="15" ry="11"/><ellipse cx="1286" cy="128" rx="15" ry="11"/>
          <path d="M695 345q-60-40-45-60q30-10 47 5q30-15 47-3q10 20-49 58zM700 350q60-45 85-30q15 20 0 40q-50 10-85-10zM690 348q-50-40-75-25q5 20-2 35q20 15 77-10zM697 355q-5 45 15 52q30-10 40-15q0-20-55-37zM690 355l-70 50"/>
          <path d="M375 435l35-80q20-15 45-5l45 75q-20 10-40 0l-10-20-35 5-5 20zM425 385l10-15 10 15z"/>
          <path d="M640 500q-5-15 30-25l200-35q50-5 75 50q20 30-10 45l-210 40q-30 5-50-15zM700 578q20 10 225-45q10 5-5 15l-205 40z"/><text class="digits" x="672" y="560" font-size="86" transform="rotate(-9 672 560)" stroke-dasharray="7 2">09:28</text>
          <path d="M580 450l40 18M560 475h45M560 490l50 0M560 505l45-5"/>
          <path d="M580 620l45-12 60 48-15 10 110 95q-5 10-20 5z"/>
          <path d="M830 650q20-50 90-55q80 20 75 55q-20 60-90 60q-70-20-75-60zM930 595q60-30 65 45M830 650q-40 0-25 30q-30 15-15 35q30 0 50-10q30 15 50 5"/>
          <path d="M215 765q0-15 30-18l165-25 200-28q20 0 25 20l28 145q0 15-170 38l-190 36q-20 0-25-15zM425 725l60 175M235 755l60 175M525 745l75-10M520 778l85-12M500 815l105-15M505 850l70-12M455 745l15 20 15-15 10 15 15-25M290 798l95-15M355 840q-20-25 5-18q20 0 15 20q30-10 30 5q-10 10-30 8q15 15-5 20q-20 5-22-15q-30 20-38 0q5-20 30-10z"/>
          <ellipse cx="713" cy="923" rx="55" ry="37"/><path d="M690 905l50 10-12 8 15 15-15 5-15-12-5 15z"/>
          <path d="M805 960q20-90 120-100q100 10 140 135q-40 15-80 0M805 960q60-10 95-70q20 40 75 20q20 20 10 50"/>
          <path d="M1035 790q-10-55 40-55q60 10 70 60q20 60-10 67q-50 5-60-60q-35 10-40-12zM1075 765q10 40-15 60M1075 765q40 30 65 30M1165 740q0-60 60-70q50 10 40 60q-40 80-80 75q-30-5-20-65z"/>
          <path d="M1030 450q0-20 50-70q60-90 130-70q70 20 100 35q90-10 115 15q20 50-5 130q-20 60-60 60q-40 0-60-70q-80-50-140-20q-100 30-130-10z"/><ellipse cx="1188" cy="423" rx="28" ry="19"/><ellipse cx="1300" cy="450" rx="28" ry="19"/><path d="M1145 360l20-5 5-18 28-2 5 16 25-2 3 16-25 6 3 16-28 5-8-15-25 3zM1258 405l22-35 8 2-20 35z"/>
          <path d="M1285 848l120 40-95 110q-60-10-75-30zM1280 897h120"/><ellipse cx="1422" cy="884" rx="70" ry="48"/><ellipse cx="1422" cy="884" rx="48" ry="34"/><path d="M1422 852v64M1376 884h94M1390 862l64 44M1454 862l-64 44"/>
          <path d="M1310 630q-10-50 40-55q60 0 90-40q50-30 80 0q40 40 0 110q-30 30-100 20q-100 10-110-35zM1330 640h100v15h-100q-15-5 0-15zM1430 600q50 0 95 0M1350 675l-50 60 15 5 60-60M1435 660l15 90h20l-10-90M1480 665l55 65 10-8-45-60"/>
          <path d="M1380 985q0-20 20-30q25 20 18 40q-20 20-38-10zM1060 40q0-12 12-18q25 15 18 25q-20 15-30-7zM1205 40q0-15 12-20q25 20 18 30q-20 15-30-10z"/>
          <path d="M1300 10q60 60 110 35q20-20 0-60"/>
          <ellipse cx="832" cy="1115" rx="70" ry="60"/><path d="M835 1145l-10-35 30 0zM1490 1115l20-15 20 5 20-8 20 10"/>
        </g>
      </g>
    </svg>
    <div class="content">
      <h1 class="title">Hi Michael</h1>
      <div class="chat">
        <div class="scrollbar"><div class="thumb"></div></div>
        <div class="messages">
          <article class="msg other h-hi"><p class="who">Rita:</p><p class="text">hi</p></article>
          <article class="msg mine h-how"><p class="who">:me</p><p class="text">?how are u</p></article>
          <article class="msg other h-one"><p class="who">Rita:</p><p class="text">I'm fine</p></article>
          <article class="msg other h-long"><p class="who">Rita:</p><p class="text">I'm excited to build my new app<br>today with react!</p></article>
          <article class="msg mine h-luck"><p class="who">:me</p><p class="text">Me too! Good luck</p></article>
          <article class="msg other h-one"><p class="who">Rita:</p><p class="text">Thanks</p></article>
        </div>
      </div>
      <form class="composer">
        <input class="field" type="text" placeholder="write something...">
        <svg class="send" width="58" height="56" viewBox="0 0 58 56"><path d="M1.200 12.500L8 26.500H56.200L54.500 24 11 1.200C5-1.500 0 3 1 9.500zM8 30.500H56.200L54.500 32.500 11 54.800C5 57.500 0 53 1 47z"/></svg>
      </form>
    </div>
  </section>
  <section class="panel panel-right">
    <svg class="wallpaper" width="1010" height="1143" viewBox="-7 0 1010 1143" aria-hidden="true"><use href="#doodles"/></svg>
    <div class="content">
      <h1 class="title">Hi Rita</h1>
      <div class="chat">
        <div class="scrollbar"><div class="thumb"></div></div>
        <div class="messages">
          <article class="msg mine h-hi"><p class="who">:me</p><p class="text">hi</p></article>
          <article class="msg other h-how"><p class="who">Michael:</p><p class="text">how are u?</p></article>
          <article class="msg mine h-one"><p class="who">:me</p><p class="text">I'm fine</p></article>
          <article class="msg mine h-long"><p class="who">:me</p><p class="text">I'm excited to build my new app<br>!today with react</p></article>
          <article class="msg other h-luck"><p class="who">Michael:</p><p class="text">Me too! Good luck</p></article>
          <article class="msg mine h-one"><p class="who">:me</p><p class="text">Thanks</p></article>
        </div>
      </div>
      <form class="composer">
        <input class="field" type="text" placeholder="write something...">
        <svg class="send" width="58" height="56" viewBox="0 0 58 56"><path d="M1.200 12.500L8 26.500H56.200L54.500 24 11 1.200C5-1.500 0 3 1 9.500zM8 30.500H56.200L54.500 32.500 11 54.800C5 57.500 0 53 1 47z"/></svg>
      </form>
    </div>
  </section>
</main>
</body>
</html>
```
FILE: styles.css
```css
* { box-sizing: border-box; }
body, h1, p { margin: 0; }
body {
  font-family: Inter, "Liberation Sans", sans-serif;
  color: #000;
  overflow: hidden;
}
.app {
  display: grid;
  grid-template-columns: 996px 966px;
  height: 1143px;
}
.panel {
  position: relative;
  overflow: hidden;
  background: linear-gradient(#ebebe8 0, #ece9e4 20%, #ece7e0 42%, #eee5df 54%, #ede5dc 66%, #ede4db 75%, #ede4db 100%);
}
.panel-left { border-right: 4px solid #000; }
.wallpaper { position: absolute; top: 0; left: 0; }
.doodles {
  fill: none;
  stroke: #2a1a10;
  stroke-width: 2;
  stroke-linejoin: round;
  stroke-linecap: round;
  opacity: .068;
}
.doodles * { vector-effect: non-scaling-stroke; }
.doodles text { font-weight: 600; font-family: Inter, sans-serif; }
.doodles .digits { font-weight: 400; }
marker { fill: none; stroke: #2a1a10; stroke-width: 2; overflow: visible; }
.doodles polyline { stroke: none; }
.dots-s { marker: url(#dot-s); }
.dots-m { marker: url(#dot-m); }
.dots-l { marker: url(#dot-l); }
.stars { marker: url(#star); }
.stars-b { marker: url(#star-b); }
.sparks { marker: url(#spark); }

.content {
  position: relative;
  display: flex;
  flex-direction: column;
  height: 100%;
  padding-left: 53px;
}
.panel-right .content { padding-left: 60px; }
.title {
  flex: none;
  height: 104px;
  padding-top: 18px;
  margin-left: -53px;
  font-size: 48px;
  line-height: 56px;
  font-weight: 700;
  letter-spacing: -1.2px;
  text-align: center;
  width: 984px;
}
.panel-right .title { margin-left: -60px; width: 998px; letter-spacing: -.9px; }
.chat { display: flex; flex: none; height: 944px; }
.scrollbar {
  width: 13px;
  padding: 53px 1px 3px 2px;
  background: #fafafa;
  border: solid #f0f0f0;
  border-width: 0 1px;
}
.panel-right .scrollbar { padding-top: 52px; }
.thumb { height: 100%; background: #c1c1c1; border-radius: 4px; }
.messages {
  display: flex;
  flex-direction: column;
  gap: 12px;
  width: 847px;
  padding: 3px 0 0 21px;
}
.panel-right .messages { width: 847px; }
.msg {
  display: flex;
  flex-direction: column;
  justify-content: space-between;
  padding: 25px 24px 23px;
  border-radius: 30px;
  font-size: 29px;
  line-height: 35px;
  letter-spacing: -.67px;
  white-space: nowrap;
  text-align: right;
}
.other { align-self: flex-start; background: rgba(250, 254, 247, .95); }
.other .who { color: #45b8b8; font-weight: 700; letter-spacing: -.35px; text-align: left; }
.mine { align-self: flex-end; background: rgba(146, 214, 117, .87); }
.h-hi { height: 124px; }
.h-how { height: 131px; width: 190px; }
.h-one { height: 126px; width: 144px; }
.h-long { height: 190px; width: 461px; }
.h-luck { height: 140px; width: 288px; }
.other.h-hi { width: 113px; }
.mine.h-hi { width: 97px; }
.composer {
  display: flex;
  align-items: flex-start;
  padding: 23px 0 0 74px;
  gap: 31px;
}
.field {
  width: 631px;
  height: 57px;
  margin-top: 1px;
  padding: 0 23px;
  border: 1px solid #767676;
  border-radius: 3px;
  background: #fff;
  font: 30px "Liberation Sans", Arial, sans-serif;
}
.field::placeholder { color: #757575; opacity: 1; }
.send { fill: #000; }
```
